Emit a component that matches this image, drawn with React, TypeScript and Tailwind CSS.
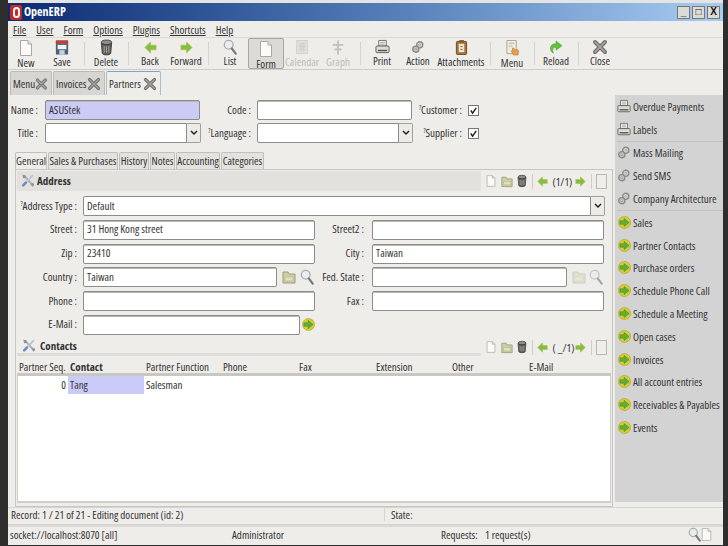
import React from 'react';

type IconProps = { className?: string };

const Doc = ({ className = 'w-[14px] h-[18px]' }: IconProps) => (
  <svg viewBox="0 0 14 18" className={className}>
    <path d="M1.5 1.5h7.5l3.5 3.5v11.500h-11z" fill="#fbfbf8" stroke="#a9a9a2" />
    <path d="M9 1.500v3.500h3.500" fill="#e4e4de" stroke="#a9a9a2" />
  </svg>
);

const Floppy = () => (
  <svg viewBox="0 0 16 18" className="w-[14px] h-[17px]">
    <rect x="1" y="1" width="14" height="16" rx="1" fill="#47627f" />
    <rect x="1" y="1" width="14" height="4" fill="#b8433c" />
    <rect x="3" y="6" width="10" height="5" fill="#f4f4f0" />
    <rect x="5" y="12" width="6" height="5" fill="#c9d2dc" />
  </svg>
);

const Trash = ({ className = 'w-[13px] h-[17px]' }: IconProps) => (
  <svg viewBox="0 0 14 18" className={className}>
    <ellipse cx="7" cy="3.500" rx="5.500" ry="2.500" fill="#8f8f8a" stroke="#3f3f3c" />
    <path d="M1.500 4l1 11.500c1.500 2 7.500 2 9 0l1-11.500c-2 2.500-9 2.500-11 0z" fill="#5f5f5b" stroke="#3a3a38" />
    <path d="M4.500 7.500v7M7 8v7M9.500 7.500v7" stroke="#a9a9a4" />
  </svg>
);

const Arrow = ({ left, className = 'w-[13px] h-[13px]' }: IconProps & { left?: boolean }) => (
  <svg viewBox="0 0 14 14" className={className}>
    <path
      d={left ? 'M1 7l6-6v3.500h6v5H7V13z' : 'M13 7L7 1v3.500H1v5h6V13z'}
      fill="#7cc242"
      stroke="#c2b94a"
      strokeWidth="0.800"
    />
  </svg>
);

const Magnifier = ({ className = 'w-[14px] h-[16px]', faded }: IconProps & { faded?: boolean }) => (
  <svg viewBox="0 0 16 18" className={className} opacity={faded ? 0.6 : 1}>
    <circle cx="6.500" cy="6.500" r="5" fill="#e9edf0" stroke="#a8acb0" strokeWidth="1.500" />
    <path d="M10 10.500l4.500 6" stroke="#77777a" strokeWidth="2.500" strokeLinecap="round" />
  </svg>
);

const Folder = ({ faded, className = 'w-[14px] h-[14px]' }: IconProps & { faded?: boolean }) => (
  <svg viewBox="0 0 14 14" className={className} opacity={faded ? 0.4 : 1}>
    <path d="M1 2h5l1 2h6v9H1z" fill="#cfcfa6" stroke="#9c9c78" />
    <path d="M3 7h8v4H3z" fill="#e0e0c4" stroke="#a8a888" strokeWidth="0.500" />
  </svg>
);

const Printer = ({ className = 'w-[15px] h-[16px]' }: IconProps) => (
  <svg viewBox="0 0 16 16" className={className}>
    <path d="M4 1h8v6H4z" fill="#f4f4f0" stroke="#6d6d6a" />
    <path d="M5.500 3h5M5.500 5h5" stroke="#a3a3a0" />
    <rect x="1" y="7" width="14" height="7" rx="1" fill="#dcdcd8" stroke="#5f5f5c" />
    <rect x="3" y="11" width="10" height="1.500" fill="#55554f" />
  </svg>
);

const Gears = ({ className = 'w-[14px] h-[16px]' }: IconProps) => (
  <svg viewBox="0 0 16 16" className={className} fill="none" stroke="#8b8b88" strokeWidth="1.600">
    <circle cx="10" cy="5.500" r="3.500" fill="#d8d8d4" />
    <circle cx="5.500" cy="10.500" r="3.500" fill="#c4c4c0" />
    <circle cx="10" cy="5.500" r="1" fill="#fff" strokeWidth="0.800" />
    <circle cx="5.500" cy="10.500" r="1" fill="#fff" strokeWidth="0.800" />
  </svg>
);

const Clipboard = () => (
  <svg viewBox="0 0 14 18" className="w-[13px] h-[17px]">
    <rect x="1.500" y="2.500" width="11" height="14" rx="1" fill="#a8713a" stroke="#6b4a24" />
    <rect x="4" y="5" width="6" height="9" fill="#efe6d2" />
    <rect x="4.500" y="1" width="5" height="3" fill="#8a5c2e" />
    <path d="M6 8h2M6 11h2" stroke="#6b4a24" />
  </svg>
);

const MenuHand = () => (
  <svg viewBox="0 0 16 18" className="w-[15px] h-[18px]">
    <path d="M2 1h10v14H2z" fill="#f2ece0" stroke="#a8a49a" />
    <path d="M4 4h6M4 7h4" stroke="#b3aea3" />
    <path d="M8 9l1.500 0 .5 2 3-.5 1.500 1-.5 5H9l-2.500-4.500 1.500 0z" fill="#e6a04c" stroke="#b87a2e" strokeWidth="0.600" />
  </svg>
);

const Reload = () => (
  <svg viewBox="0 0 16 16" className="w-[16px] h-[15px]">
    <path d="M2 9c0-3.500 3-5 6-5V1l6.500 5L8 11V8c-2 0-3.500 .500-3.500 3 0 1 .500 2 1 3C3.500 13.500 2 11.500 2 9z" fill="#62bf3f" stroke="#4d9f30" strokeWidth="0.500" />
  </svg>
);

const CloseX = ({ className = 'w-[16px] h-[16px]' }: IconProps) => (
  <svg viewBox="0 0 16 16" className={className}>
    <path d="M3 3l10 10M13 3L3 13" stroke="#6f6f6c" strokeWidth="4" strokeLinecap="round" />
    <path d="M3 3l10 10M13 3L3 13" stroke="#a9a9a6" strokeWidth="1.500" strokeLinecap="round" />
  </svg>
);

// crossed wrench and screwdriver of the section headers
const Tools = () => (
  <svg viewBox="0 0 16 16" className="w-[14px] h-[15px] shrink-0">
    <path d="M4 3l9 10" stroke="#aab2bd" strokeWidth="2.500" strokeLinecap="round" />
    <path d="M13 2.500L4 12" stroke="#bcc3cc" strokeWidth="2" strokeLinecap="round" />
    <path d="M5.500 10.500L2.500 13.500" stroke="#6d8cc2" strokeWidth="3" strokeLinecap="round" />
    <path d="M1.500 1l4 1.500-.5 2.500-2.500.5z" fill="#8b929c" />
    <path d="M11 12l3-1.500 1 3-2 1.500z" fill="#8b929c" />
  </svg>
);

const GoIcon = ({ className = 'w-[13px] h-[13px]' }: IconProps) => (
  <svg viewBox="0 0 14 14" className={className}>
    <circle cx="7" cy="7" r="6.500" fill="#d8cc2e" stroke="#a89f22" strokeWidth="0.600" />
    <path d="M2 7l0-2h4.500V2.500L12 7l-5.500 4.500V9H2z" fill="#5fae3c" stroke="#3f8a28" strokeWidth="0.500" />
  </svg>
);

const Calendar = () => (
  <svg viewBox="0 0 16 18" className="w-[14px] h-[17px]" opacity="0.45">
    <rect x="2" y="1" width="12" height="15" fill="#d4d4d0" stroke="#aaa" />
    <path d="M4 5h8M4 8h8M4 11h8M7 3v11M10 3v11" stroke="#a5a5a0" />
  </svg>
);

const Graph = () => (
  <svg viewBox="0 0 16 18" className="w-[14px] h-[17px]" opacity="0.45">
    <path d="M8 1v16M2 6h12M4 11h8" stroke="#888" strokeWidth="2" />
  </svg>
);

const TOOLBAR: (
  | { sep: true }
  | { label: string; icon: React.ReactNode; w?: string; disabled?: boolean; active?: boolean }
)[] = [
  { label: 'New', icon: <Doc /> },
  { label: 'Save', icon: <Floppy /> },
  { sep: true },
  { label: 'Delete', icon: <Trash /> },
  { sep: true },
  { label: 'Back', icon: <Arrow left /> },
  { label: 'Forward', icon: <Arrow /> },
  { sep: true },
  { label: 'List', icon: <Magnifier /> },
  { label: 'Form', icon: <Doc />, active: true },
  { label: 'Calendar', icon: <Calendar />, disabled: true },
  { label: 'Graph', icon: <Graph />, disabled: true },
  { sep: true },
  { label: 'Print', icon: <Printer /> },
  { label: 'Action', icon: <Gears /> },
  { label: 'Attachments', icon: <Clipboard />, w: 'w-[50px]' },
  { sep: true },
  { label: 'Menu', icon: <MenuHand /> },
  { sep: true },
  { label: 'Reload', icon: <Reload /> },
  { sep: true },
  { label: 'Close', icon: <CloseX /> },
];

const SIDE_GROUPS = [
  { icon: <Printer className="w-[14px] h-[15px]" />, items: ['Overdue Payments', 'Labels'] },
  { icon: <Gears className="w-[14px] h-[15px]" />, items: ['Mass Mailing', 'Send SMS', 'Company Architecture'] },
  {
    icon: <GoIcon />,
    items: [
      'Sales',
      'Partner Contacts',
      'Purchase orders',
      'Schedule Phone Call',
      'Schedule a Meeting',
      'Open cases',
      'Invoices',
      'All account entries',
      'Receivables & Payables',
      'Events',
    ],
  },
];

const COLUMNS = [
  { label: 'Partner Seq.', w: 'w-[51px]' },
  { label: 'Contact', w: 'w-[76px]', bold: true },
  { label: 'Partner Function', w: 'w-[77px]' },
  { label: 'Phone', w: 'w-[76px]' },
  { label: 'Fax', w: 'w-[77px]' },
  { label: 'Extension', w: 'w-[76px]' },
  { label: 'Other', w: 'w-[77px]' },
  { label: 'E-Mail', w: 'flex-1' },
];

const Help = () => <span className="text-[7px] leading-none relative -top-[4px]">?</span>;

const Field = ({ value, w, tint }: { value?: string; w: string; tint?: boolean }) => (
  <div
    className={`${w} h-[20px] shrink-0 flex items-center px-[3px] pb-[2px] rounded-[2px] border border-[#8c8c88] shadow-[inset_0_1px_0_#b8b8b4] ${
      tint ? 'bg-[#cbcbf5]' : 'bg-white'
    }`}
  >
    {value}
  </div>
);

const Combo = ({ w, value }: { w: string; value?: string }) => (
  <div className={`${w} h-[20px] shrink-0 flex`}>
    <div className="flex-1 flex items-center px-[3px] pb-[2px] rounded-l-[2px] border border-[#8c8c88] bg-white">{value}</div>
    <div className="w-[14px] flex items-center justify-center border border-l-0 border-[#a0a09c] rounded-r-[2px] bg-[#ecebe7]">
      <svg viewBox="0 0 8 6" className="w-[8px] h-[6px]">
        <path d="M1 1l3 3 3-3" fill="none" stroke="#222" strokeWidth="1.500" />
      </svg>
    </div>
  </div>
);

const Check = () => (
  <div className="w-[11px] h-[11px] border border-[#777] bg-white flex items-center justify-center">
    <svg viewBox="0 0 10 10" className="w-[9px] h-[9px]">
      <path d="M2 5l2 3 4-6" fill="none" stroke="#222" strokeWidth="1.600" />
    </svg>
  </div>
);

const Row = ({ children, className = '' }: { children: React.ReactNode; className?: string }) => (
  <div className={`h-[20px] flex items-center ${className}`}>{children}</div>
);

const Label = ({ w, children }: { w: string; children: React.ReactNode }) => (
  <div className={`${w} shrink-0 pb-[2px] text-right whitespace-nowrap`}>{children}</div>
);

const Pager = ({ text }: { text: string }) => (
  <div className="flex items-center gap-[4.500px] pl-[5px] pr-[4px]">
    <Doc className="w-[10px] h-[14px]" />
    <Folder className="w-[12px] h-[13px]" />
    <Trash className="w-[10px] h-[14px]" />
    <div className="w-px h-[15px] bg-[#cfcdc8]" />
    <Arrow left className="w-[11px] h-[11px]" />
    <span className="w-[18px] text-center whitespace-nowrap">{text}</span>
    <Arrow className="w-[11px] h-[11px]" />
    <div className="w-px h-[15px] bg-[#cfcdc8]" />
    <div className="w-[11px] h-[15px] border border-[#b9b9b3] bg-[#efefea]" />
  </div>
);

const App = () => (
  <div className="w-[728px] h-[546px] overflow-hidden bg-[#2e2e2e] pl-[8px] pr-[5px] pb-px font-['Open_Sans',sans-serif] font-stretch-[75%] text-[11px] leading-none text-[#333]">
    <div className="h-full flex flex-col bg-[#efedea]">
      {/* title bar */}
      <div className="h-[3px] bg-[#e4e4e2]" />
      <div className="h-[18px] flex items-center pl-[2px] pr-[3px] bg-gradient-to-r from-[#0c2a72] via-[#4f78b4] to-[#a8cdf2]">
        <div className="w-[12px] h-[15px] bg-[#c62a24] rounded-[2px] flex items-center justify-center">
          <div className="w-[7px] h-[11px] border-2 border-white rounded-full" />
        </div>
        <span className="ml-[2px] flex-1 text-[12px] font-bold text-white">OpenERP</span>
        <div className="flex gap-[2px]">
          {['_', '□', 'X'].map(c => (
            <div key={c} className="w-[13px] h-[13px] bg-[#dcdcd6] border border-[#777] flex items-center justify-center font-['Liberation_Sans',sans-serif] text-[10px] font-bold text-[#111]">
              {c}
            </div>
          ))}
        </div>
      </div>

      {/* menu bar */}
      <div className="h-[17px] flex items-center gap-[10px] pl-[5px] border-b border-[#dcdad5]">
        {['File', 'User', 'Form', 'Options', 'Plugins', 'Shortcuts', 'Help'].map(m => (
          <span key={m} className="underline underline-offset-1">{m}</span>
        ))}
      </div>

      {/* toolbar */}
      <div className="h-[32px] flex items-stretch border-b border-[#cfcdc8]">
        {TOOLBAR.map((t, i) =>
          'sep' in t ? (
            <div key={i} className="w-[8px] flex justify-center py-[4px]">
              <div className="w-px bg-[#d5d3ce]" />
            </div>
          ) : (
            <div
              key={t.label}
              className={`${t.w ?? 'w-[36px]'} flex flex-col items-center justify-between pt-[1px] pb-[3px] ${
                t.active ? 'bg-[#dcdad6] border border-[#a8a6a2] rounded-[2px]' : ''
              } ${t.disabled ? 'text-[#bdbbb6]' : ''}`}
            >
              <div className="h-[18px] flex items-center">{t.icon}</div>
              <span className="whitespace-nowrap">{t.label}</span>
            </div>
          ),
        )}
      </div>

      {/* document tabs */}
      <div className="h-[25px] flex items-end pl-[2px] gap-px pt-px">
        {[
          ['Menu', 'w-[42px]'],
          ['Invoices', 'w-[52px]'],
          ['Partners', 'w-[55px]'],
        ].map(([t, w], i) => (
          <div
            key={t}
            className={`${w} h-[24px] flex items-center justify-between pl-[2px] pr-[3px] rounded-t-[2px] border border-b-0 ${
              i === 2 ? 'bg-[#efedea] border-[#a9bcd0] border-t-[#7fa4cb]' : 'bg-[#d8d6d2] border-[#bdbbb6]'
            }`}
          >
            <span className="whitespace-nowrap">{t}</span>
            <CloseX className="w-[14px] h-[14px]" />
          </div>
        ))}
      </div>

      {/* main area */}
      <div className="h-[412px] flex">
        <div className="flex-1 min-w-0 flex flex-col">
          {/* partner head */}
          <div className="pt-[5px] pl-[2px] flex flex-col gap-[3px]">
            <Row>
              <Label w="w-[28px]">Name :</Label>
              <div className="w-[7px]" />
              <Field value="ASUStek" tint w="w-[155px]" />
              <Label w="w-[51px]">Code :</Label>
              <div className="w-[6px]" />
              <Field w="w-[155px]" />
              <Label w="w-[50px]"><Help />Customer :</Label>
              <div className="w-[6px]" />
              <Check />
            </Row>
            <Row>
              <Label w="w-[28px]">Title :</Label>
              <div className="w-[7px]" />
              <Combo w="w-[156px]" />
              <Label w="w-[50px]"><Help />Language :</Label>
              <div className="w-[6px]" />
              <Combo w="w-[156px]" />
              <Label w="w-[49px]"><Help />Supplier :</Label>
              <div className="w-[6px]" />
              <Check />
            </Row>
          </div>

          {/* form tabs */}
          <div className="mt-[9px] pl-[7px] h-[17px] flex items-end gap-px">
            {[
              ['General', 'w-[32px]'],
              ['Sales & Purchases', 'w-[70px]'],
              ['History', 'w-[30px]'],
              ['Notes', 'w-[25px]'],
              ['Accounting', 'w-[44px]'],
              ['Categories', 'w-[43px]'],
            ].map(([t, w], i) => (
              <div
                key={t}
                className={`${w} h-[17px] pb-[2px] flex items-center justify-center whitespace-nowrap border border-b-0 border-[#c2c0bb] rounded-t-[2px] ${
                  i === 0 ? 'bg-[#efedea]' : 'bg-[#e4e2de]'
                }`}
              >
                {t}
              </div>
            ))}
          </div>

          {/* tab panel */}
          <div className="ml-[7px] mr-[2px] flex-1 flex flex-col border border-[#c8c6c1] px-[1px] pb-[3px]">
            <div className="h-[20px] mt-px flex items-center">
              <div className="flex-1 h-full flex items-center gap-[2px] pl-[4px] pb-[2px] bg-[#e3e1dd]">
                <Tools />
                <span className="font-bold">Address</span>
              </div>
              <Pager text="(1/1)" />
            </div>

            <div className="mt-[5px] flex flex-col gap-[3.800px]">
              <Row>
                <Label w="w-[60px]"><Help />Address Type :</Label>
                <div className="w-[6px]" />
                <Combo w="w-[522px]" value="Default" />
              </Row>
              <Row>
                <Label w="w-[60px]">Street :</Label>
                <div className="w-[6px]" />
                <Field value="31 Hong Kong street" w="w-[232px]" />
                <Label w="w-[49px]">Street2 :</Label>
                <div className="w-[8px]" />
                <Field w="w-[232px]" />
              </Row>
              <Row>
                <Label w="w-[60px]">Zip :</Label>
                <div className="w-[6px]" />
                <Field value="23410" w="w-[232px]" />
                <Label w="w-[49px]">City :</Label>
                <div className="w-[8px]" />
                <Field value="Taiwan" w="w-[232px]" />
              </Row>
              <Row>
                <Label w="w-[60px]">Country :</Label>
                <div className="w-[6px]" />
                <Field value="Taiwan" w="w-[194px]" />
                <div className="w-[38px] flex items-center justify-between pl-[5px] pr-px">
                  <Folder />
                  <Magnifier />
                </div>
                <Label w="w-[49px]">Fed. State :</Label>
                <div className="w-[8px]" />
                <Field w="w-[195px]" />
                <div className="w-[37px] flex items-center justify-between pl-[5px] pr-px">
                  <Folder faded />
                  <Magnifier faded />
                </div>
              </Row>
              <Row>
                <Label w="w-[60px]">Phone :</Label>
                <div className="w-[6px]" />
                <Field w="w-[232px]" />
                <Label w="w-[49px]">Fax :</Label>
                <div className="w-[8px]" />
                <Field w="w-[232px]" />
              </Row>
              <Row>
                <Label w="w-[60px]">E-Mail :</Label>
                <div className="w-[6px]" />
                <Field w="w-[217px]" />
                <div className="w-[2px]" />
                <GoIcon />
              </Row>
            </div>

            <div className="h-[17px] mt-[4px] flex items-center">
              <div className="flex-1 h-full flex items-center gap-[4px] pl-[5px] border-b-[3px] border-[#dfddd9]">
                <Tools />
                <span className="font-bold">Contacts</span>
              </div>
              <Pager text="( _/1)" />
            </div>

            {/* contacts table */}
            <div className="mt-[4px] flex-1 flex flex-col">
              <div className="h-[16px] flex items-center border-b-[3px] border-[#c9c7c2]">
                {COLUMNS.map(c => (
                  <div key={c.label} className={`${c.w} pl-[2px] whitespace-nowrap ${c.bold ? 'font-bold' : ''}`}>
                    {c.label}
                  </div>
                ))}
              </div>
              <div className="flex-1 bg-white border-x border-b-2 border-[#d0cec9]">
                <div className="h-[18px] flex items-center">
                  <div className="w-[50px] pr-[2px] text-right">0</div>
                  <div className="w-[76px] h-full pl-[2px] flex items-center bg-[#cbcbf8]">Tang</div>
                  <div className="pl-[2px]">Salesman</div>
                </div>
              </div>
            </div>
          </div>
        </div>

        {/* sidebar */}
        <div className="w-[108px] shrink-0 mb-[5px] bg-[#d3d3d3] pl-[2px] flex flex-col">
          {SIDE_GROUPS.map((g, gi) => (
            <div key={gi} className={gi > 0 ? 'border-t border-[#c0c0be]' : ''}>
              {g.items.map(item => (
                <div key={item} className="h-[22.800px] flex items-center gap-[2px] whitespace-nowrap">
                  <div className="w-[14px] flex justify-center">{g.icon}</div>
                  <span>{item}</span>
                </div>
              ))}
            </div>
          ))}
        </div>
      </div>

      {/* record bar */}
      <div className="h-[18px] pb-[3px] flex items-center border-y border-[#d6d4cf]">
        <div className="w-[376px] pl-[3px] whitespace-nowrap">Record: 1 / 21 of 21 - Editing document (id: 2)</div>
        <div className="w-px h-full bg-[#d6d4cf]" />
        <div className="pl-[6px]">State:</div>
      </div>

      {/* status bar */}
      <div className="flex-1 flex items-center pl-[2px] pr-[11px] pb-[3px] border-t-2 border-[#dcdad5]">
        <div className="w-[222px] whitespace-nowrap">socket://localhost:8070 [all]</div>
        <div className="w-[209px]">Administrator</div>
        <div className="w-[44px]">Requests:</div>
        <div className="flex-1">1 request(s)</div>
        <Magnifier className="w-[13px] h-[15px]" />
        <Doc className="w-[11px] h-[15px]" />
      </div>
    </div>
  </div>
);

export default App;
